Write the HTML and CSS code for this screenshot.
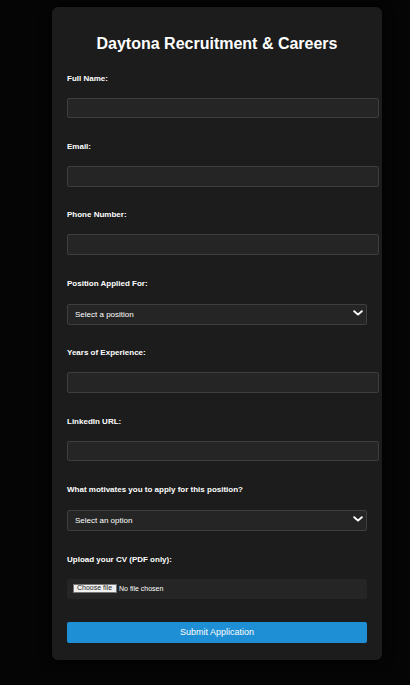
FILE: index.html
```html
<!DOCTYPE html>
<html lang="en">
<head>
<meta charset="utf-8">
<title>Daytona Recruitment &amp; Careers</title>
<link rel="stylesheet" href="styles.css">
</head>
<body>
<form class="card">
  <h1 class="title">Daytona Recruitment &amp; Careers</h1>

  <div class="field">
    <label class="label" for="name">Full Name:</label>
    <input class="text" id="name" type="text">
  </div>

  <div class="field">
    <label class="label" for="email">Email:</label>
    <input class="text" id="email" type="email">
  </div>

  <div class="field">
    <label class="label" for="phone">Phone Number:</label>
    <input class="text" id="phone" type="tel">
  </div>

  <div class="field">
    <label class="label" for="position">Position Applied For:</label>
    <div class="select-wrap">
      <select class="select" id="position">
        <option>Select a position</option>
      </select>
      <svg class="chevron" width="10" height="6" viewBox="0 0 10 6"><path d="M1.2 1.2 L5 4.6 L8.8 1.2" fill="none" stroke="#fff" stroke-width="1.9" stroke-linecap="round" stroke-linejoin="round"/></svg>
    </div>
  </div>

  <div class="field">
    <label class="label" for="years">Years of Experience:</label>
    <input class="text" id="years" type="text">
  </div>

  <div class="field">
    <label class="label" for="linkedin">LinkedIn URL:</label>
    <input class="text" id="linkedin" type="text">
  </div>

  <div class="field">
    <label class="label" for="motive">What motivates you to apply for this position?</label>
    <div class="select-wrap">
      <select class="select" id="motive">
        <option>Select an option</option>
      </select>
      <svg class="chevron" width="10" height="6" viewBox="0 0 10 6"><path d="M1.2 1.2 L5 4.6 L8.8 1.2" fill="none" stroke="#fff" stroke-width="1.9" stroke-linecap="round" stroke-linejoin="round"/></svg>
    </div>
  </div>

  <div class="field field-last">
    <label class="label" for="cv">Upload your CV (PDF only):</label>
    <div class="file-box">
      <span class="file-btn">Choose file</span>
      <span class="file-text">No file chosen</span>
    </div>
  </div>

  <button class="submit" type="button">Submit Application</button>
</form>
</body>
</html>
```

FILE: styles.css
```css
html, body {
  margin: 0;
  padding: 0;
}

body {
  background: #050505;
  font-family: "Liberation Sans", Arial, sans-serif;
  color: #fff;
  height: 685px;
}

.card {
  box-sizing: content-box;
  width: 300px;
  padding: 15px 15px 16.5px;
  margin: 6.5px 0 0 52px;
  background: #1c1c1c;
  border-radius: 6px;
  box-shadow: 0 0 12px rgba(0, 0, 0, 0.9);
  display: flex;
  flex-direction: column;
}

.title {
  margin: 13.5px 0 20.7px;
  font-size: 16px;
  line-height: 18px;
  font-weight: bold;
  text-align: center;
  color: #fff;
}

.field {
  display: flex;
  flex-direction: column;
  margin-bottom: 23.7px;
}

.field-last {
  margin-bottom: 23px;
}

.label {
  display: block;
  font-size: 8px;
  line-height: 10px;
  font-weight: bold;
  color: #fff;
  margin-bottom: 14px;
}

.text {
  box-sizing: border-box;
  width: 312px;
  height: 20.7px;
  margin: 0;
  padding: 0 6px;
  background: #252525;
  border: 1px solid #3e3e3e;
  border-radius: 2px;
  color: #fff;
  font-family: inherit;
  font-size: 8px;
  outline: none;
}

.select-wrap {
  position: relative;
  width: 300px;
}

.select {
  box-sizing: border-box;
  width: 300px;
  height: 20.7px;
  margin: 0;
  padding: 0 7px;
  background: #252525;
  border: 1px solid #3e3e3e;
  border-radius: 2px;
  color: #fff;
  font-family: inherit;
  font-size: 8px;
  -webkit-appearance: none;
  appearance: none;
  outline: none;
}

.chevron {
  position: absolute;
  right: 4px;
  top: 7px;
  pointer-events: none;
}

.file-box {
  box-sizing: border-box;
  width: 300px;
  height: 20px;
  padding: 0 5.5px;
  background: #252525;
  border-radius: 2px;
  display: flex;
  align-items: center;
  gap: 2.5px;
}

.file-btn {
  box-sizing: border-box;
  height: 8.5px;
  padding: 0 3.5px;
  background: #efefef;
  border: 1px solid #767676;
  color: #222;
  font-size: 7px;
  line-height: 6.5px;
  display: flex;
  align-items: center;
}

.file-text {
  font-size: 7px;
  color: #fff;
}

.submit {
  box-sizing: border-box;
  width: 300px;
  height: 21.7px;
  margin: 0;
  padding: 0;
  border: none;
  border-radius: 2px;
  background: #1e8fd5;
  color: #fff;
  font-family: inherit;
  font-size: 9px;
}
```
